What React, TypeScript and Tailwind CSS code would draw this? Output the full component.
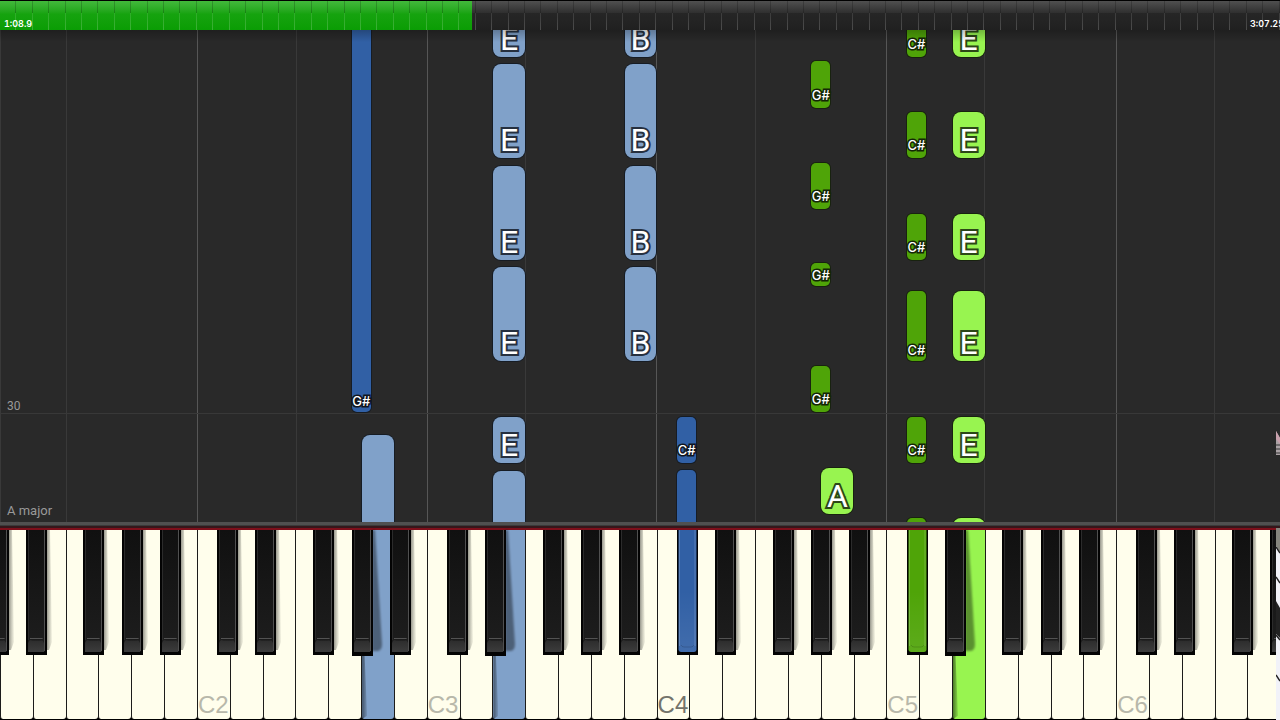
type NoteColor = "sky" | "blue" | "green" | "lime";

type Note = {
  pitch: string;
  octave: number;
  top: number;
  height: number;
  color: NoteColor;
  label?: boolean;
};

const WHITE = ["C", "D", "E", "F", "G", "A", "B"];

// Left edge of each black key, in white-key widths from its octave's C
const BLACK: Record<string, number> = {
  "C#": 0.62,
  "D#": 1.78,
  "F#": 3.54,
  "G#": 4.71,
  "A#": 5.87,
};

const KEY_COUNT = 39;
const ROLL_HEIGHT = 492;
const BLACK_WIDTH = 0.64;

// The keyboard starts on D1
const whiteKeys = Array.from({ length: KEY_COUNT }, (_, i) => ({
  pitch: WHITE[(i + 1) % 7],
  octave: 1 + Math.floor((i + 1) / 7),
}));

const blackKeys = [1, 2, 3, 4, 5, 6].flatMap((octave) =>
  Object.keys(BLACK).map((pitch) => ({ pitch, octave })),
);

const NOTES: Note[] = [
  { pitch: "G#", octave: 2, top: -20, height: 402, color: "blue", label: true },
  { pitch: "A", octave: 2, top: 405, height: 110, color: "sky" },
  { pitch: "E", octave: 3, top: -67, height: 94, color: "sky", label: true },
  { pitch: "E", octave: 3, top: 34, height: 94, color: "sky", label: true },
  { pitch: "E", octave: 3, top: 136, height: 94, color: "sky", label: true },
  { pitch: "E", octave: 3, top: 237, height: 94, color: "sky", label: true },
  { pitch: "E", octave: 3, top: 387, height: 46, color: "sky", label: true },
  { pitch: "E", octave: 3, top: 441, height: 80, color: "sky" },
  { pitch: "B", octave: 3, top: -67, height: 94, color: "sky", label: true },
  { pitch: "B", octave: 3, top: 34, height: 94, color: "sky", label: true },
  { pitch: "B", octave: 3, top: 136, height: 94, color: "sky", label: true },
  { pitch: "B", octave: 3, top: 237, height: 94, color: "sky", label: true },
  { pitch: "C#", octave: 4, top: 387, height: 46, color: "blue", label: true },
  { pitch: "C#", octave: 4, top: 440, height: 80, color: "blue" },
  { pitch: "G#", octave: 4, top: 31, height: 47, color: "green", label: true },
  { pitch: "G#", octave: 4, top: 133, height: 46, color: "green", label: true },
  { pitch: "G#", octave: 4, top: 233, height: 23, color: "green", label: true },
  { pitch: "G#", octave: 4, top: 336, height: 46, color: "green", label: true },
  { pitch: "A", octave: 4, top: 438, height: 46, color: "lime", label: true },
  { pitch: "C#", octave: 5, top: -20, height: 47, color: "green", label: true },
  { pitch: "C#", octave: 5, top: 82, height: 46, color: "green", label: true },
  { pitch: "C#", octave: 5, top: 184, height: 46, color: "green", label: true },
  { pitch: "C#", octave: 5, top: 261, height: 70, color: "green", label: true },
  { pitch: "C#", octave: 5, top: 387, height: 46, color: "green", label: true },
  { pitch: "C#", octave: 5, top: 488, height: 47, color: "green" },
  { pitch: "E", octave: 5, top: -20, height: 47, color: "lime", label: true },
  { pitch: "E", octave: 5, top: 82, height: 46, color: "lime", label: true },
  { pitch: "E", octave: 5, top: 184, height: 46, color: "lime", label: true },
  { pitch: "E", octave: 5, top: 261, height: 70, color: "lime", label: true },
  { pitch: "E", octave: 5, top: 387, height: 46, color: "lime", label: true },
  { pitch: "E", octave: 5, top: 488, height: 47, color: "lime" },
];

const NOTE_STYLE: Record<NoteColor, string> = {
  sky: "rounded-lg bg-[#80a1c9] ring-[#161c24]",
  blue: "rounded-[5px] bg-[#3160a5] ring-[#161c24]",
  green: "rounded-[5px] bg-[#4fa408] ring-[#18220f]",
  lime: "rounded-lg bg-[#98f450] ring-[#18220f]",
};

const LABEL_STROKE: Record<NoteColor, string> = {
  sky: "[-webkit-text-stroke:4px_#26303f]",
  blue: "[-webkit-text-stroke:3px_#10151f]",
  green: "[-webkit-text-stroke:3px_#142606]",
  lime: "[-webkit-text-stroke:4px_#2c4717]",
};

const PRESSED: Record<string, string> = {
  A2: "#80a1c9",
  E3: "#80a1c9",
  "C#4": "#3160a5",
  "C#5": "#4fa408",
  E5: "#98f450",
};

const percent = (keys: number) => `${(keys / KEY_COUNT) * 100}%`;

function keyOffset(pitch: string, octave: number) {
  return (octave - 1) * 7 - 1 + (BLACK[pitch] ?? WHITE.indexOf(pitch));
}

function labelPadding(note: Note) {
  if (note.pitch.length === 1) return "pb-0";
  return note.height < 30 || note.height > 60 ? "pb-[3px]" : "pb-[5px]";
}

function Timeline() {
  return (
    <header
      role="progressbar"
      aria-label="Song position"
      aria-valuenow={37}
      className="relative h-[30px] shrink-0 overflow-hidden border-t border-black bg-linear-to-b from-[#505050] via-[#303030] via-40% to-[#292929]"
    >
      <div className="h-full w-[36.9%] bg-linear-to-b from-[#42b83b] via-[#16a30f] via-45% to-[#0a9d04]" />
      <div className="absolute inset-x-0 bottom-0 h-[17px] bg-black/20 [clip-path:inset(0_0_0_36.9%)]" />
      <div className="absolute inset-0 flex">
        {Array.from({ length: KEY_COUNT * 2 }, (_, i) => (
          <div key={i} className="flex flex-1 flex-col items-end">
            <div className="h-3 w-px bg-black/20" />
            <div className="w-px flex-1 bg-linear-to-b from-white/10 to-white/20" />
          </div>
        ))}
      </div>
      <div className="absolute inset-x-0 bottom-0 flex h-3 items-center justify-between pl-1 text-[9px] leading-3 font-semibold text-white tabular-nums">
        <span>1:08.9</span>
        <span className="-mr-1">3:07.25</span>
      </div>
    </header>
  );
}

function NoteBar({ note }: { note: Note }) {
  const sharp = note.pitch.length > 1;
  return (
    <div
      className={`absolute flex items-end justify-center ring-1 ${NOTE_STYLE[note.color]} ${labelPadding(note)}`}
      style={{
        left: percent(keyOffset(note.pitch, note.octave) + (sharp ? 0.01 : 0.03)),
        width: percent(sharp ? 0.58 : 0.97),
        top: `${(note.top / ROLL_HEIGHT) * 100}%`,
        height: `${(note.height / ROLL_HEIGHT) * 100}%`,
      }}
    >
      {note.label && (
        <span
          className={`text-white [paint-order:stroke_fill] ${LABEL_STROKE[note.color]} ${
            sharp
              ? "font-[Inter,sans-serif] text-[13px] leading-4 font-medium"
              : "text-[32px] leading-[35px]"
          }`}
        >
          {note.pitch}
        </span>
      )}
    </div>
  );
}

function PianoRoll() {
  return (
    <section className="relative min-h-0 flex-1 overflow-hidden bg-[#292929] font-[Roboto,sans-serif]">
      <div className="absolute inset-0 flex">
        {whiteKeys.map(({ pitch, octave }, i) => (
          <div
            key={pitch + octave}
            className={`flex-1 ${
              pitch === "C"
                ? "border-l border-[#565656]"
                : pitch === "F" || i === 0
                  ? "border-l border-[#393939]"
                  : ""
            }`}
          />
        ))}
      </div>
      <div className="absolute inset-x-0 top-[77.8%] border-t border-[#383838]" />
      <p className="absolute bottom-[22%] left-[7px] text-xs leading-4 text-[#999]">30</p>
      <p className="absolute bottom-[3px] left-[7px] text-[13px] leading-4 text-[#999]">A major</p>
      {NOTES.map((note) => (
        <NoteBar key={`${note.pitch}${note.octave}-${note.top}`} note={note} />
      ))}
      <div className="absolute inset-x-0 top-0 h-3 bg-linear-to-b from-black/25 to-transparent" />
    </section>
  );
}

function WhiteKey({ pitch, octave }: { pitch: string; octave: number }) {
  const pressed = PRESSED[pitch + octave];
  return (
    <button
      type="button"
      aria-label={pitch + octave}
      className="relative flex flex-1 items-end rounded-b-[3px] border-l border-[#1c1c1a] bg-[#fffeec]"
      style={pressed ? { backgroundColor: pressed } : undefined}
    >
      {pressed && (
        <span className="absolute bottom-0 left-0 h-16 w-[5px] bg-linear-to-r from-black/50 to-black/10 [clip-path:polygon(0_0,50%_0,100%_95%,0_100%)]" />
      )}
      {pitch === "C" && (
        <span
          className={`text-2xl leading-7 ${octave === 4 ? "text-[#74746b]" : "text-[#b8b8aa]"}`}
        >
          {pitch + octave}
        </span>
      )}
    </button>
  );
}

function BlackKey({ pitch, octave }: { pitch: string; octave: number }) {
  const pressed = PRESSED[pitch + octave];
  const next = WHITE[WHITE.indexOf(pitch[0]) + 1];
  const deep = Boolean(PRESSED[next + octave]);
  return (
    <button
      type="button"
      aria-label={pitch + octave}
      className="absolute top-0 h-[125px]"
      style={{ left: percent(keyOffset(pitch, octave)), width: percent(BLACK_WIDTH) }}
    >
      <svg viewBox="0 0 21 125" preserveAspectRatio="none" className="size-full overflow-visible">
        {deep && (
          <path d="M20 0H23L30 114Q30 120 26 121H20Z" filter="url(#soften)" opacity="0.4" />
        )}
        {!deep && !pressed && <path d="M20 0H24L26 112L23 120H20Z" fill="url(#cast)" />}
        <rect width="21" height={deep ? 126 : 125} fill="#030303" />
        {pressed ? (
          <>
            <path d="M1.5 0H19.5V120Q19 122 17 122H4Q2 122 1.5 120Z" fill={pressed} />
            <path d="M1.5 0H19.5V119Q19 122 17 122H4Q2 122 1.5 119Z" fill="url(#pressed)" />
            <path d="M2.5 0V116M18 0V116" stroke="#fff" strokeOpacity="0.2" />
            <path d="M4 115Q5 117 7 117H14Q16 117 17 115" stroke="#000" strokeOpacity="0.15" fill="none" />
          </>
        ) : (
          <>
            <path d="M2 0H18.5V122H2Z" fill="url(#face)" />
            <path d="M2.5 0V110" stroke="#2b2b2b" />
            <path d="M18.5 0V121" stroke="#505050" />
            <path d="M2 122V113Q3 110 5 110H15Q17 110 18 113V122Z" fill="url(#foot)" />
            <path d="M4 108.5H16.5" stroke="#6a6a6a" />
            <path d="M4 108.5Q5 111 7 111H14Q16 111 16.5 108.5" fill="#1b1b1b" opacity="0.6" />
          </>
        )}
      </svg>
    </button>
  );
}

function Keyboard() {
  return (
    <section
      aria-label="Keyboard"
      className="relative flex h-[190px] shrink-0 border-b border-black bg-black font-['Liberation_Sans',Arial,sans-serif]"
    >
      <svg width="0" height="0" className="absolute">
        <defs>
          <filter id="soften" x="-50%" width="200%">
            <feGaussianBlur stdDeviation="0.9" />
          </filter>
          <linearGradient id="face" x2="0" y2="1">
            <stop offset="0" stopColor="#101010" />
            <stop offset="1" stopColor="#1e1e1e" />
          </linearGradient>
          <linearGradient id="foot" x2="0" y2="1">
            <stop offset="0" stopColor="#2c2c2c" />
            <stop offset="1" stopColor="#3c3c3c" />
          </linearGradient>
          <linearGradient id="pressed" x2="0" y2="1">
            <stop offset="0.5" stopColor="#fff" stopOpacity="0" />
            <stop offset="1" stopColor="#fff" stopOpacity="0.08" />
          </linearGradient>
          <linearGradient id="cast">
            <stop offset="0" stopColor="#55554e" stopOpacity="0.75" />
            <stop offset="1" stopColor="#8c8c80" stopOpacity="0.1" />
          </linearGradient>
        </defs>
      </svg>
      {whiteKeys.map((key) => (
        <WhiteKey key={key.pitch + key.octave} {...key} />
      ))}
      {blackKeys.map((key) => (
        <BlackKey key={key.pitch + key.octave} {...key} />
      ))}
    </section>
  );
}

// Sliver of the desktop that shows past the right edge of the player
function DesktopEdge() {
  return (
    <svg
      viewBox="0 0 4 290"
      preserveAspectRatio="none"
      className="absolute right-0 bottom-0 h-[290px] w-1"
      aria-hidden="true"
    >
      <path d="M0 1L4 8V25H0Z" fill="#a9a1a4" />
      <path d="M0 1L4 8V14L0 9Z" fill="#c8a0ac" />
      <path d="M0 15H4M0 19H4M0 23H4" stroke="#333" />
      <path d="M0 98H4V290H0Z" fill="#f1f2f8" />
      <path d="M0 98H4V122L0 116Z" fill="#86867e" />
      <path d="M0 171L4 178V208L0 204Z" fill="#222" />
      <path d="M0 117L4 123M0 147L4 153M0 205L4 210M0 245L4 251" stroke="#222" strokeWidth="1.5" />
    </svg>
  );
}

export default function App() {
  return (
    <main className="relative flex h-screen flex-col overflow-hidden bg-[#292929] font-[Inter,sans-serif]">
      <Timeline />
      <PianoRoll />
      <div className="h-1 shrink-0 border-b border-[#3a3a3a] bg-[#505050]" />
      <div className="h-1 shrink-0 border-b-2 border-[#7e0f1b] bg-[#35171b]" />
      <Keyboard />
      <DesktopEdge />
    </main>
  );
}
